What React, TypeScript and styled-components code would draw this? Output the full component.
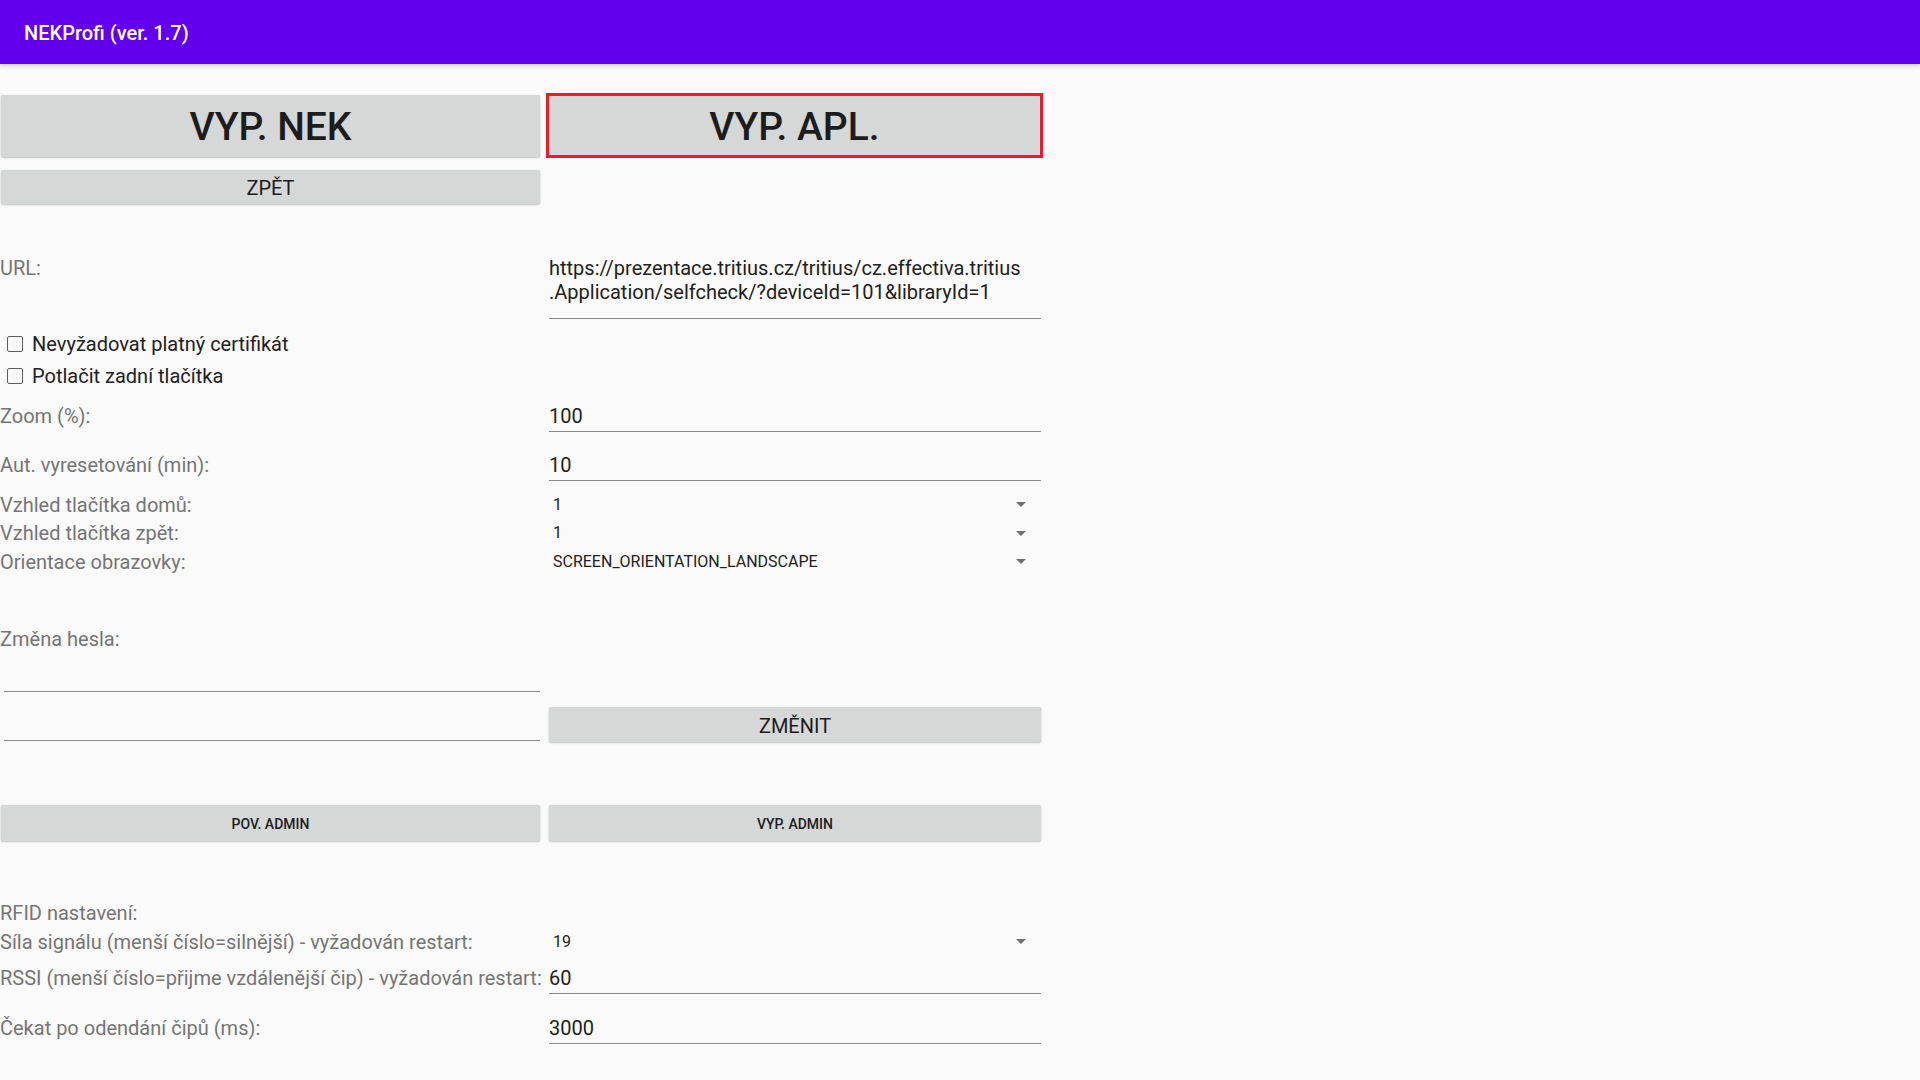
import React from "react";
import styled, { createGlobalStyle } from "styled-components";

const Global = createGlobalStyle`
  html, body { margin: 0; padding: 0; background: #fafafa; }
  body { font-family: Roboto, "Noto Sans", "Liberation Sans", Arial, sans-serif; }
  * { box-sizing: border-box; }
`;

const Screen = styled.div`
  width: 1920px;
  height: 1080px;
  overflow: hidden;
  background: #fafafa;
`;

const AppBar = styled.header`
  position: relative;
  z-index: 1;
  height: 64px;
  background: #6200ee;
  color: #ffffff;
  display: flex;
  align-items: center;
  padding: 2px 0 0 24px;
  font-size: 20px;
  font-weight: 500;
  box-shadow: 0 2px 4px rgba(0, 0, 0, 0.18);
`;

const Form = styled.main`
  width: 1043px;
  display: flex;
  flex-direction: column;
`;

const Row = styled.div<{ $mt?: number; $h?: number; $align?: string; $pt?: number }>`
  display: grid;
  grid-template-columns: 546px 497px;
  margin-top: ${(p) => p.$mt ?? 0}px;
  padding-top: ${(p) => p.$pt ?? 0}px;
  height: ${(p) => (p.$h ? `${p.$h}px` : "auto")};
  align-items: ${(p) => p.$align ?? "start"};
`;

const Button = styled.button<{
  $size: number;
  $h: number;
  $focused?: boolean;
  $side?: "left" | "right";
  $mt?: number;
  $weight?: number;
}>`
  appearance: none;
  margin: ${(p) => p.$mt ?? 0}px ${(p) => (p.$side === "right" ? 2 : 6)}px 0
    ${(p) => (p.$side === "right" ? 3 : 1)}px;
  height: ${(p) => p.$h}px;
  background: #d6d7d7;
  border: none;
  border-radius: 2px;
  box-shadow: 0 1px 2px rgba(0, 0, 0, 0.22), 0 0 1px rgba(0, 0, 0, 0.12);
  color: #1c1c1c;
  font-family: Roboto, "Noto Sans", sans-serif;
  font-weight: ${(p) => p.$weight ?? 500};
  font-size: ${(p) => p.$size}px;
  text-transform: uppercase;
  display: flex;
  align-items: center;
  justify-content: center;
  padding: 2px 0 0;
  ${(p) =>
    p.$focused &&
    `
    margin: 0;
    border: 3px solid #ed1c24;
    border-radius: 0;
    box-shadow: none;
  `}
`;

const Label = styled.div`
  padding-top: 1px;
  font-size: 20px;
  line-height: 24px;
  color: #757575;
  white-space: nowrap;
`;

const Field = styled.div<{ $pb?: number }>`
  margin: 0 2px 0 3px;
  padding-top: 1px;
  padding-bottom: ${(p) => p.$pb ?? 3}px;
  font-size: 20px;
  line-height: 24px;
  color: #212121;
  white-space: nowrap;
  border-bottom: 1px solid #8a8a8a;
`;

const PasswordField = styled.div<{ $h: number }>`
  margin: 0 6px 0 4px;
  height: ${(p) => p.$h}px;
  border-bottom: 1px solid #8a8a8a;
`;

const Spinner = styled.div`
  display: flex;
  align-items: center;
  justify-content: space-between;
  padding: 0 17px 0 7px;
  height: 100%;
  font-size: 16px;
  color: #212121;
`;

const Arrow = styled.span`
  width: 0;
  height: 0;
  border-left: 5px solid transparent;
  border-right: 5px solid transparent;
  border-top: 5px solid #6f6f6f;
  margin-top: 1px;
`;

const CheckRow = styled.label<{ $mt?: number }>`
  display: flex;
  align-items: center;
  height: 32px;
  margin-top: ${(p) => p.$mt ?? 0}px;
  padding-left: 7px;
  font-size: 20px;
  color: #212121;
`;

const Box = styled.span`
  width: 16px;
  height: 16px;
  border: 1.5px solid #5f5f5f;
  border-radius: 2px;
  margin-right: 9px;
`;

type SpinnerRowProps = { label: string; value: string; mt?: number; h: number };
const SpinnerRow = ({ label, value, mt, h }: SpinnerRowProps) => (
  <Row $mt={mt} $h={h} $pt={2} $align="center">
    <Label>{label}</Label>
    <Spinner>
      <span>{value}</span>
      <Arrow />
    </Spinner>
  </Row>
);

type EditRowProps = { label: string; value: string; mt: number };
const EditRow = ({ label, value, mt }: EditRowProps) => (
  <Row $mt={mt}>
    <Label>{label}</Label>
    <Field>{value}</Field>
  </Row>
);

export default function App() {
  return (
    <Screen>
      <Global />
      <AppBar>NEKProfi (ver. 1.7)</AppBar>
      <Form>
        <Row $mt={29} $align="center">
          <Button $size={39} $h={62}>VYP. NEK</Button>
          <Button $size={39} $h={65} $focused>VYP. APL.</Button>
        </Row>
        <Row $mt={12}>
          <Button $size={20} $h={34} $weight={400}>ZPĚT</Button>
        </Row>
        <Row $mt={51}>
          <Label>URL:</Label>
          <Field $pb={14}>
            https://prezentace.tritius.cz/tritius/cz.effectiva.tritius
            <br />
            .Application/selfcheck/?deviceId=101&amp;libraryId=1
          </Field>
        </Row>
        <CheckRow $mt={9}>
          <Box />
          Nevyžadovat platný certifikát
        </CheckRow>
        <CheckRow>
          <Box />
          Potlačit zadní tlačítka
        </CheckRow>
        <EditRow mt={11} label="Zoom (%):" value="100" />
        <EditRow mt={20} label="Aut. vyresetování (min):" value="10" />
        <SpinnerRow mt={8} h={28.5} label="Vzhled tlačítka domů:" value="1" />
        <SpinnerRow h={28.5} label="Vzhled tlačítka zpět:" value="1" />
        <SpinnerRow h={28.5} label="Orientace obrazovky:" value="SCREEN_ORIENTATION_LANDSCAPE" />
        <Row $mt={51.5}>
          <Label>Změna hesla:</Label>
        </Row>
        <Row>
          <PasswordField $h={41} />
        </Row>
        <Row>
          <PasswordField $h={49} />
          <Button $size={20} $h={35} $side="right" $mt={15} $weight={400}>ZMĚNIT</Button>
        </Row>
        <Row $mt={63}>
          <Button $size={14} $h={36}>POV. ADMIN</Button>
          <Button $size={14} $h={36} $side="right">VYP. ADMIN</Button>
        </Row>
        <Row $mt={59}>
          <Label>RFID nastavení:</Label>
        </Row>
        <SpinnerRow mt={1} h={28} label="Síla signálu (menší číslo=silnější) - vyžadován restart:" value="19" />
        <EditRow mt={11} label="RSSI (menší číslo=přijme vzdálenější čip) - vyžadován restart:" value="60" />
        <EditRow mt={21} label="Čekat po odendání čipů (ms):" value="3000" />
      </Form>
    </Screen>
  );
}
